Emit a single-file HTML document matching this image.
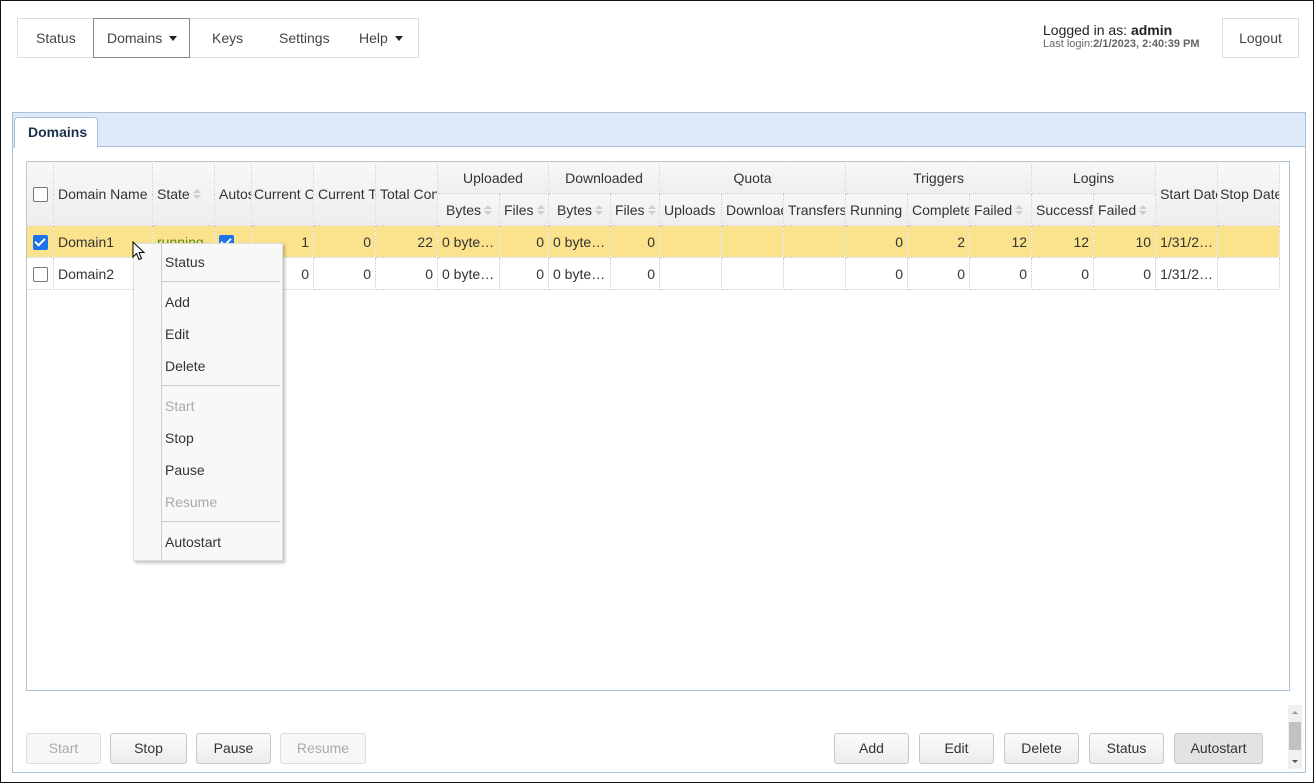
<!DOCTYPE html>
<html><head><meta charset="utf-8"><style>
*{box-sizing:border-box}
body{margin:0;width:1314px;height:783px;overflow:hidden;font-family:"Liberation Sans",Arial,sans-serif;font-size:14px;color:#333;background:#fff}
.frame{position:absolute;left:0;top:0;width:1314px;height:783px;border:1px solid #111}
.nav{position:absolute;left:17px;top:18px;width:402px;height:40px;border:1px solid #ddd}
.nav span{position:absolute;top:11px;font-size:14px;color:#444}
.navsel{position:absolute;left:75px;top:-1px;width:97px;height:40px;border:1px solid #888}
.caret{display:inline-block;width:0;height:0;border-left:4px solid transparent;border-right:4px solid transparent;border-top:5px solid #222;margin-left:7px;vertical-align:2px}
.abs{position:absolute}
.panel{position:absolute;left:12px;top:112px;width:1294px;height:661px;border:1px solid #a8c0d8}
.tabbar{position:absolute;left:0;top:0;width:1292px;height:34px;background:#dfeaf8;border-bottom:1px solid #a8c0d8}
.tab{position:absolute;left:1px;top:4px;width:84px;height:31px;background:#fff;border:1px solid #a8c0d8;border-bottom:none;border-radius:4px 4px 0 0;font-weight:bold;color:#1b3150;padding:6px 0 0 13px}
.grid{position:absolute;left:26px;top:161px;width:1264px;height:530px;border:1px solid #a8c0d8}
table{position:absolute;left:-1px;top:-1px;border-collapse:collapse;table-layout:fixed;width:1253px}
td,th{border:1px dotted #ccc;height:32px;padding:0 4px;white-space:nowrap;overflow:hidden;font-weight:normal;font-size:14px;color:#333}
th{background:linear-gradient(#f7f7f7,#eee);text-align:left}
th.c{text-align:center}
td.r{text-align:right}
tr.sel td{background:#fbe28c}
.cb{display:inline-block;width:15px;height:15px;border:1px solid #777;border-radius:2px;background:#fff;vertical-align:middle}
.cbk{display:inline-block;width:15px;height:15px;border-radius:2px;background:#1a73e8;vertical-align:middle;position:relative}
.cbk:after{content:"";position:absolute;left:4px;top:1px;width:4px;height:8px;border:solid #fff;border-width:0 2px 2px 0;transform:rotate(45deg)}
.s{display:inline-block;width:7px;height:11px;vertical-align:middle;margin-left:3px;position:relative}
.s:before{content:"";position:absolute;top:0;left:0;border-left:4px solid transparent;border-right:4px solid transparent;border-bottom:4px solid #ccc}
.s:after{content:"";position:absolute;top:6px;left:0;border-left:4px solid transparent;border-right:4px solid transparent;border-top:4px solid #ccc}
.btn{position:absolute;top:733px;height:31px;border:1px solid #c8c8c8;border-radius:3px;background:linear-gradient(#fbfbfb,#ececec);text-align:center;line-height:29px;color:#333}
.dis{color:#aaa;border-color:#ddd;background:#f7f7f7}
.menu{position:absolute;left:133px;top:243px;width:150px;height:318px;background:#f8f8f8;border:1px solid #ddd;box-shadow:2px 2px 3px rgba(0,0,0,.25)}
.menu .g{position:absolute;left:27px;top:0;width:1px;height:316px;background:#ccc}
.menu .i{position:absolute;left:31px;font-size:14px;color:#333}
.menu .d{color:#aaa}
.menu .sep{position:absolute;left:28px;width:118px;height:1px;background:#ccc}
</style></head><body>
<div class="frame"></div>
<div class="nav">
<div class="navsel"></div>
<span style="left:18px">Status</span>
<span style="left:89px">Domains<i class="caret"></i></span>
<span style="left:194px">Keys</span>
<span style="left:261px">Settings</span>
<span style="left:341px">Help<i class="caret"></i></span>
</div>
<div class="abs" style="left:1043px;top:22px;font-size:14px;color:#222">Logged in as: <b>admin</b></div>
<div class="abs" style="left:1043px;top:38px;font-size:11px;color:#666">Last login:<b>2/1/2023, 2:40:39 PM</b></div>
<div class="abs" style="left:1222px;top:18px;width:77px;height:40px;border:1px solid #ddd;text-align:center;line-height:38px;color:#444">Logout</div>

<div class="panel"><div class="tabbar"></div><div class="tab">Domains</div></div>
<div class="grid">
<table>
<colgroup><col style="width:27px"><col style="width:99px"><col style="width:62px"><col style="width:37px"><col style="width:62px"><col style="width:62px"><col style="width:62px"><col style="width:62px"><col style="width:49px"><col style="width:62px"><col style="width:49px"><col style="width:62px"><col style="width:62px"><col style="width:62px"><col style="width:62px"><col style="width:62px"><col style="width:62px"><col style="width:62px"><col style="width:62px"><col style="width:62px"><col style="width:62px"></colgroup>
<tr><th rowspan="2" style="padding-left:6px"><span class="cb"></span></th><th rowspan="2">Domain Name</th><th rowspan="2">State<i class="s"></i></th><th rowspan="2">Autostart</th><th rowspan="2" style="padding:0 2px">Current Connections</th><th rowspan="2">Current Transfers</th><th rowspan="2">Total Connections</th>
<th colspan="2" class="c">Uploaded</th><th colspan="2" class="c">Downloaded</th><th colspan="3" class="c">Quota</th><th colspan="3" class="c">Triggers</th><th colspan="2" class="c">Logins</th><th rowspan="2">Start Date</th><th rowspan="2" style="padding:0 2px">Stop Date</th></tr>
<tr><th class="c">Bytes<i class="s"></i></th><th>Files<i class="s"></i></th><th class="c">Bytes<i class="s"></i></th><th>Files<i class="s"></i></th><th>Uploads</th><th>Downloads</th><th>Transfers</th><th>Running</th><th>Completed</th><th>Failed<i class="s"></i></th><th>Successful</th><th>Failed<i class="s"></i></th></tr>
<tr class="sel"><td style="padding-left:6px"><span class="cbk"></span></td><td>Domain1</td><td style="color:#5a8a1a">running</td><td><span class="cbk"></span></td><td class="r">1</td><td class="r">0</td><td class="r">22</td><td>0 byte…</td><td class="r">0</td><td>0 byte…</td><td class="r">0</td><td></td><td></td><td></td><td class="r">0</td><td class="r">2</td><td class="r">12</td><td class="r">12</td><td class="r">10</td><td>1/31/2…</td><td></td></tr>
<tr><td style="padding-left:6px"><span class="cb"></span></td><td>Domain2</td><td></td><td></td><td class="r">0</td><td class="r">0</td><td class="r">0</td><td>0 byte…</td><td class="r">0</td><td>0 byte…</td><td class="r">0</td><td></td><td></td><td></td><td class="r">0</td><td class="r">0</td><td class="r">0</td><td class="r">0</td><td class="r">0</td><td>1/31/2…</td><td></td></tr>
</table>
</div>

<div class="menu"><div class="g"></div>
<div class="i" style="top:10px">Status</div><div class="sep" style="top:37px"></div>
<div class="i" style="top:50px">Add</div>
<div class="i" style="top:82px">Edit</div>
<div class="i" style="top:114px">Delete</div><div class="sep" style="top:141px"></div>
<div class="i d" style="top:154px">Start</div>
<div class="i" style="top:186px">Stop</div>
<div class="i" style="top:218px">Pause</div>
<div class="i d" style="top:250px">Resume</div><div class="sep" style="top:277px"></div>
<div class="i" style="top:290px">Autostart</div>
</div>
<svg class="abs" style="left:132px;top:241px" width="14" height="22" viewBox="0 0 14 22"><path d="M1 1 L1 16 L4.5 12.5 L7 18.5 L9.5 17.5 L7 11.5 L12 11.5 Z" fill="#fff" stroke="#000" stroke-width="1"/></svg>

<div class="btn dis" style="left:26px;width:75px">Start</div>
<div class="btn" style="left:110px;width:77px">Stop</div>
<div class="btn" style="left:196px;width:75px">Pause</div>
<div class="btn dis" style="left:280px;width:86px">Resume</div>
<div class="btn" style="left:834px;width:75px">Add</div>
<div class="btn" style="left:919px;width:75px">Edit</div>
<div class="btn" style="left:1004px;width:75px">Delete</div>
<div class="btn" style="left:1089px;width:75px">Status</div>
<div class="btn" style="left:1174px;width:89px;background:#e3e3e3">Autostart</div>
<div class="abs" style="left:1288px;top:705px;width:14px;height:64px;background:#f0f0f0"></div>
<div class="abs" style="left:1289px;top:722px;width:12px;height:28px;background:#c1c1c1"></div>
<div class="abs" style="left:1292px;top:711px;border-left:3px solid transparent;border-right:3px solid transparent;border-bottom:3px solid #999"></div>
<div class="abs" style="left:1292px;top:760px;border-left:3px solid transparent;border-right:3px solid transparent;border-top:3px solid #555"></div>
</body></html>
